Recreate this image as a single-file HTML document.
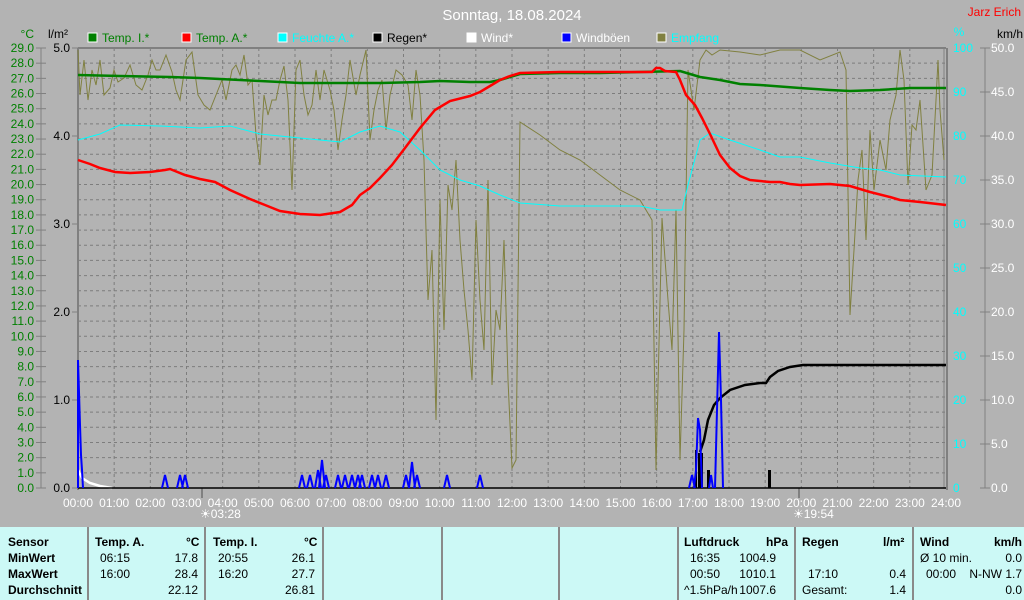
<!DOCTYPE html>
<html><head><meta charset="utf-8"><style>
body{margin:0;width:1024px;height:600px;overflow:hidden;background:#b3b3b3;font-family:"Liberation Sans",sans-serif}
svg{position:absolute;left:0;top:0}
#tbl{position:absolute;left:0;top:527px;width:1024px;height:73px;background:#ccf9f6;font-size:12px;color:#000}
.c{position:absolute;top:0;height:73px;border-left:2px solid #8a8a8a}
.t{position:absolute;white-space:nowrap}
.b{font-weight:bold}
</style></head><body>
<svg id="s" width="1024" height="527" font-family="Liberation Sans, sans-serif"></svg>
<div id="tbl">
<div class="c" style="left:87px"></div><div class="c" style="left:204px"></div><div class="c" style="left:322px"></div><div class="c" style="left:441px"></div><div class="c" style="left:558px"></div><div class="c" style="left:677px"></div><div class="c" style="left:794px"></div><div class="c" style="left:912px"></div>
<div class="t b" style="left:8px;top:8px">Sensor</div>
<div class="t b" style="left:8px;top:24px">MinWert</div>
<div class="t b" style="left:8px;top:40px">MaxWert</div>
<div class="t b" style="left:8px;top:56px">Durchschnitt</div>
<div class="t b" style="left:95px;top:8px">Temp. A.</div><div class="t b" style="left:186px;top:8px">°C</div>
<div class="t" style="left:100px;top:24px">06:15</div><div class="t" style="right:826px;top:24px">17.8</div>
<div class="t" style="left:100px;top:40px">16:00</div><div class="t" style="right:826px;top:40px">28.4</div>
<div class="t" style="right:826px;top:56px">22.12</div>
<div class="t b" style="left:213px;top:8px">Temp. I.</div><div class="t b" style="left:304px;top:8px">°C</div>
<div class="t" style="left:218px;top:24px">20:55</div><div class="t" style="right:709px;top:24px">26.1</div>
<div class="t" style="left:218px;top:40px">16:20</div><div class="t" style="right:709px;top:40px">27.7</div>
<div class="t" style="right:709px;top:56px">26.81</div>
<div class="t b" style="left:684px;top:8px">Luftdruck</div><div class="t b" style="left:766px;top:8px">hPa</div>
<div class="t" style="left:690px;top:24px">16:35</div><div class="t" style="right:248px;top:24px">1004.9</div>
<div class="t" style="left:690px;top:40px">00:50</div><div class="t" style="right:248px;top:40px">1010.1</div>
<div class="t" style="left:684px;top:56px">^1.5hPa/h</div><div class="t" style="right:248px;top:56px">1007.6</div>
<div class="t b" style="left:802px;top:8px">Regen</div><div class="t b" style="left:883px;top:8px">l/m²</div>
<div class="t" style="left:808px;top:40px">17:10</div><div class="t" style="right:118px;top:40px">0.4</div>
<div class="t" style="left:802px;top:56px">Gesamt:</div><div class="t" style="right:118px;top:56px">1.4</div>
<div class="t b" style="left:920px;top:8px">Wind</div><div class="t b" style="right:2px;top:8px">km/h</div>
<div class="t" style="left:920px;top:24px">Ø 10 min.</div><div class="t" style="right:2px;top:24px">0.0</div>
<div class="t" style="left:926px;top:40px">00:00</div><div class="t" style="right:2px;top:40px">N-NW 1.7</div>
<div class="t" style="right:2px;top:56px">0.0</div>
</div>
<script>
var s=document.getElementById('s'),h='';
var X0=78,X1=946,Y0=48,Y1=488,hw=(X1-X0)/24,st=(Y1-Y0)/29;
function T(x,y,t,c,a,fs){h+='<text x="'+x+'" y="'+y+'" fill="'+c+'" font-size="'+(fs||12)+'" text-anchor="'+(a||'start')+'">'+t+'</text>';}
for(var i=1;i<29;i++){var y=Y0+i*st;h+='<line x1="'+X0+'" x2="'+X1+'" y1="'+y+'" y2="'+y+'" stroke="#7d7d7d" stroke-dasharray="3,3"/>';}
for(var i=1;i<24;i++){var x=X0+i*hw;h+='<line x1="'+x+'" x2="'+x+'" y1="'+Y0+'" y2="'+Y1+'" stroke="#7d7d7d" stroke-dasharray="3,3"/>';}
h+='<line x1="'+X0+'" x2="'+X1+'" y1="'+Y0+'" y2="'+Y0+'" stroke="#808080" stroke-width="2"/>';
h+='<line x1="'+X0+'" x2="'+X0+'" y1="'+Y0+'" y2="'+(Y1+2)+'" stroke="#808080" stroke-width="2"/>';
h+='<line x1="944" x2="944" y1="'+Y0+'" y2="'+Y1+'" stroke="#808080"/><line x1="947" x2="947" y1="'+Y0+'" y2="'+(Y1+2)+'" stroke="#808080" stroke-width="2"/>';
h+='<line x1="41" x2="41" y1="'+Y0+'" y2="'+Y1+'" stroke="#808080"/>';
for(var i=0;i<=29;i++){var y=Y0+i*st;h+='<line x1="36" x2="46" y1="'+y+'" y2="'+y+'" stroke="#808080"/>';T(34,y+4,(29-i).toFixed(1),'#008000','end');}
T(34,38,'°C','#008000','end');T(68,38,'l/m²','#000','end');
for(var i=0;i<=5;i++){var y=Y0+i*88;h+='<line x1="72" x2="78" y1="'+y+'" y2="'+y+'" stroke="#808080"/>';T(70,y+4,(5-i).toFixed(1),'#000','end');}
T(959,36,'%','#00ffff','middle');T(1010,38,'km/h','#000','middle');
h+='<line x1="985" x2="985" y1="'+Y0+'" y2="'+Y1+'" stroke="#808080"/>';
for(var i=0;i<=10;i++){var y=Y0+i*44;T(953,y+4,(100-i*10),'#00ffff');h+='<line x1="980" x2="990" y1="'+y+'" y2="'+y+'" stroke="#808080"/>';T(991,y+4,(50-i*5).toFixed(1),'#fff');}
for(var i=0;i<=24;i++){var x=X0+i*hw;T(x,507,(i<10?'0':'')+i+':00','#fff','middle');}
h+='<line x1="202" x2="202" y1="488" y2="498" stroke="#808080" stroke-width="2"/><line x1="799" x2="799" y1="488" y2="498" stroke="#808080" stroke-width="2"/>';
T(200,518,'☀03:28','#fff','start',12);T(793,518,'☀19:54','#fff','start',12);
T(512,20,'Sonntag, 18.08.2024','#fff','middle',15);T(1021,16,'Jarz Erich','#ff0000','end',12);
var L=[[88,'#008000','Temp. I.*','#008000'],[182,'#ff0000','Temp. A.*','#008000'],[278,'#00ffff','Feuchte A.*','#00ffff'],[373,'#000','Regen*','#000'],[467,'#fff','Wind*','#fff'],[562,'#0000ff','Windböen','#fff'],[657,'#808040','Empfang','#00ffff']];
L.forEach(function(l){h+='<rect x="'+l[0]+'" y="33" width="9" height="9" fill="'+l[1]+'" stroke="#fff"/>';T(l[0]+14,42,l[2],l[3]);});
function P(pts,c,w){h+='<polyline fill="none" stroke="'+c+'" stroke-width="'+w+'" points="'+pts+'"/>';}
var e=[78,50,80,95,84,60,88,100,92,70,96,85,100,60,104,95,110,88,114,70,118,82,124,78,130,65,136,85,142,90,148,75,152,60,156,70,160,70,166,55,172,72,176,90,180,100,186,60,192,52,198,95,204,105,210,110,216,95,222,80,226,100,232,70,236,65,240,75,244,55,248,85,252,80,256,135,260,165,264,95,268,115,272,100,276,100,280,80,284,66,288,100,292,190,296,70,300,60,304,95,308,115,312,105,316,70,320,100,324,70,330,90,334,110,338,150,342,120,346,95,350,60,356,95,360,75,366,50,370,140,374,110,378,90,382,80,386,130,390,95,396,70,402,75,408,85,412,120,416,70,420,95,424,160,428,300,432,250,436,420,440,200,444,330,448,185,452,210,456,160,460,240,464,290,468,330,472,380,476,220,480,300,484,350,488,180,492,385,496,310,500,330,504,240,508,380,512,468,516,460,520,122,540,135,560,150,580,160,600,175,620,190,640,200,652,220,656,470,662,218,668,300,672,350,676,210,680,460,684,330,688,70,694,110,700,60,706,50,712,55,720,50,740,52,760,55,780,50,800,50,820,60,840,52,846,70,850,315,854,250,858,180,862,150,866,240,870,130,874,190,880,140,886,170,890,120,896,95,900,50,904,80,908,185,912,125,916,130,920,100,926,190,932,175,936,100,938,60,940,110,944,160];
P(e.join(','),'#808040',1);
P('78,140 100,134 120,125 160,126 200,128 230,126 260,134 300,138 340,142 360,132 380,126 400,132 420,150 440,170 460,180 480,186 500,195 520,203 560,206 600,206 640,206 660,210 682,210 688,185 700,140 710,133 730,140 760,150 780,157 800,157 830,163 860,168 880,170 900,175 946,177','#00ffff',1);
P('78,75 120,76 170,77 200,78 260,81 300,83 380,83 420,82 440,81 470,82 490,82 500,80 520,74 560,73 600,73 640,72 680,71 690,74 700,77 720,80 740,84 760,85 800,88 830,90 850,91 880,90 910,88 946,88','#008000',2.5);
P('78,160 90,164 100,168 115,172 130,173 150,172 165,170 170,169 185,175 200,179 215,182 230,190 250,199 265,205 280,211 300,214 320,215 340,212 352,205 360,195 370,188 380,178 392,165 405,148 420,128 435,110 450,101 470,96 480,92 490,86 500,80 510,76 520,73 560,72 600,72 640,72 652,72 656,68 660,68 665,71 676,72 680,80 686,95 695,105 702,118 710,134 720,155 730,168 740,176 750,180 760,181 770,182 780,182 790,184 800,185 830,184 850,186 870,192 890,197 900,200 920,202 946,205','#ff0000',2.5);
h+='<rect x="695" y="450" width="2" height="38" fill="#000"/><rect x="698" y="453" width="5" height="35" fill="#000"/><rect x="707" y="470" width="3" height="18" fill="#000"/><rect x="768" y="470" width="3" height="18" fill="#000"/>';
P('700,452 704,440 708,420 714,405 720,398 730,390 745,385 760,383 766,383 770,377 778,371 790,367 803,365 946,365','#000',2.5);
P('78,470 82,478 90,483 100,486 112,488','#fff',2.5);
h+='<line x1="704" x2="946" y1="488" y2="488" stroke="#fff" stroke-dasharray="1,2"/>';
h+='<line x1="78" x2="946" y1="488" y2="488" stroke="#000" stroke-width="1.5"/>';
P('78,488 78,360 79,392 80,425 81,455 82,470 83,488','#0000ff',2);
[[165,475],[180,475],[185,475],[302,475],[310,475],[318,470],[322,460],[326,475],[338,475],[345,475],[352,475],[358,475],[362,475],[372,475],[378,475],[386,475],[406,475],[412,462],[417,475],[447,475],[480,475],[692,475]].forEach(function(p){P((p[0]-3)+',488 '+p[0]+','+p[1]+' '+(p[0]+3)+',488','#0000ff',2);});
P('694,488 696,470 698,418 700,430 702,488','#0000ff',2);
P('715,488 717,410 719,332 721,400 723,488','#0000ff',2);
P('709,488 711,475 713,488','#0000ff',2);
s.innerHTML=h;
</script>
</body></html>
